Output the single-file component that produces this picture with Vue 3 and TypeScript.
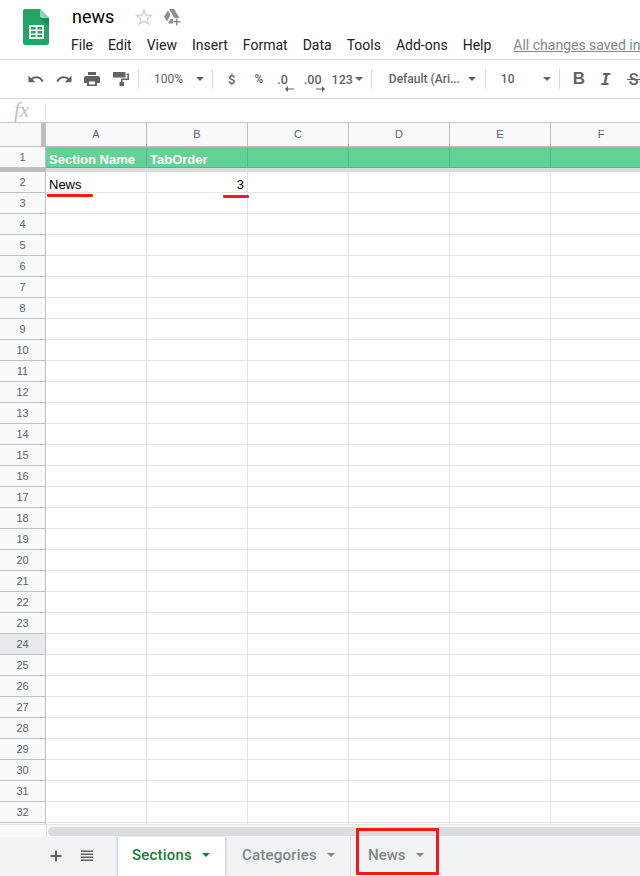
<script setup lang="ts">
const menus = ['File', 'Edit', 'View', 'Insert', 'Format', 'Data', 'Tools', 'Add-ons', 'Help']
const cols = ['A', 'B', 'C', 'D', 'E', 'F']
const rows: number[] = []
for (let i = 3; i <= 32; i++) rows.push(i)
</script>

<template>
  <div class="page">
    <header class="top">
      <svg class="logo" width="26" height="36" viewBox="0 0 26 36">
        <path d="M2 0H17L26 9V34a2 2 0 0 1-2 2H2a2 2 0 0 1-2-2V2a2 2 0 0 1 2-2z" fill="#23a566" />
        <path d="M17 9L26 18V9z" fill="#1c8a55" />
        <path d="M17 0L26 9H19a2 2 0 0 1-2-2z" fill="#8ed1b1" />
        <path d="M6 16H21V30H6zM8 18V20.500H12.500V18zM14.500 18V20.500H19V18zM8 22V24.500H12.500V22zM14.500 22V24.500H19V22zM8 26V28H12.500V26zM14.500 26V28H19V26z" fill="#f1f8f4" fill-rule="evenodd" />
      </svg>
      <div class="titles">
        <div class="title-row">
          <span class="doc">news</span>
          <svg class="star" width="18" height="18" viewBox="0 0 18 18">
            <path d="M9 2l2 5.200 5.500.3-4.300 3.500 1.500 5.300L9 13.300 4.300 16.300l1.500-5.300L1.500 7.500 7 7.200z" fill="none" stroke="#d0d0d0" stroke-width="1.200" />
          </svg>
          <svg class="drive" width="18" height="18" viewBox="0 0 18 18">
            <path d="M6 1h5l5.500 9h-5zM5 2.500l2.500 4.500-3.500 6.500-3-5zM5 15.500l2.500-4.500H10v4.500z" fill="#8f8f8f" />
            <path d="M13 10.500h1.500v2.500H17.500v1.500h-3V17.500H13v-3h-2.500V13H13z" fill="#8f8f8f" />
          </svg>
        </div>
        <nav class="menu">
          <span v-for="m in menus" :key="m">{{ m }}</span>
          <span class="saved">All changes saved in</span>
        </nav>
      </div>
    </header>

    <div class="toolbar">
      <svg class="ti" width="18" height="18" viewBox="0 0 18 18"><path d="M9.400 6.300c-2 0-3.800.7-5.200 1.900L1.500 5.500v6.800h6.800L5.600 9.600c1-.9 2.400-1.400 3.800-1.400 2.500 0 4.600 1.600 5.300 3.900l1.800-.6c-1-3-3.700-5.200-7.100-5.200z" fill="#5f6368" /></svg>
      <svg class="ti i2" width="18" height="18" viewBox="0 0 18 18"><path d="M8.600 6.300c2 0 3.800.7 5.200 1.900l2.700-2.700v6.800H9.700l2.700-2.700c-1-.9-2.400-1.400-3.800-1.400-2.500 0-4.600 1.600-5.300 3.900l-1.800-.6c1-3 3.700-5.200 7.100-5.200z" fill="#5f6368" /></svg>
      <svg class="ti i3" width="18" height="18" viewBox="0 0 18 18"><path d="M5 2h8v3H5zM3 6h12a2 2 0 0 1 2 2V13h-3v3H4V13H1V8a2 2 0 0 1 2-2zM6 11.500v3h6v-3z" fill="#5f6368" fill-rule="evenodd" /></svg>
      <svg class="ti i4" width="18" height="18" viewBox="0 0 18 18"><path d="M1 2h12.500v5.500H1zM14.500 3.500H17V10H10.500v2H12v4H7.500V12H9V8.500h6.500V5h-1z" fill="#5f6368" /></svg>
      <i class="sep s1"></i>
      <span class="tt zoom">100%</span>
      <i class="caret c1"></i>
      <i class="sep s2"></i>
      <span class="tt dollar">$</span>
      <span class="tt pct">%</span>
      <span class="tt dec1">.0<svg width="9" height="6" viewBox="0 0 9 6"><path d="M9 2.400H3V0L0 3l3 3V3.600h6z" fill="#5f6368" /></svg></span>
      <span class="tt dec2">.00<svg width="9" height="6" viewBox="0 0 9 6"><path d="M0 2.400h6V0l3 3-3 3V3.600H0z" fill="#5f6368" /></svg></span>
      <span class="tt fmt">123</span>
      <i class="caret c2"></i>
      <i class="sep s3"></i>
      <span class="tt font">Default (Ari...</span>
      <i class="caret c3"></i>
      <i class="sep s4"></i>
      <span class="tt size">10</span>
      <i class="caret c4"></i>
      <i class="sep s5"></i>
      <span class="fb bold">B</span>
      <span class="fb ital">I</span>
      <span class="fb strike">S<i></i></span>
    </div>

    <div class="formula">
      <span class="fx">fx</span>
      <i class="fx-sep"></i>
    </div>

    <div class="sheet">
      <div class="head-row">
        <div class="corner"><i class="freeze-v"></i></div>
        <div v-for="c in cols" :key="c" class="col-head">{{ c }}</div>
      </div>
      <div class="row frozen">
        <div class="num">1</div>
        <div class="cell green">Section Name</div>
        <div class="cell green">TabOrder</div>
        <div v-for="n in 4" :key="n" class="cell green"></div>
      </div>
      <div class="freeze-h"><i></i></div>
      <div class="row second">
        <div class="num">2</div>
        <div class="cell data">News<i class="ink ink-a"></i></div>
        <div class="cell data right">3<i class="ink ink-b"></i></div>
        <div v-for="n in 4" :key="n" class="cell"></div>
      </div>
      <div v-for="r in rows" :key="r" class="row">
        <div class="num" :class="{ active: r === 24 }">{{ r }}</div>
        <div v-for="n in 6" :key="n" class="cell"></div>
      </div>
      <div class="row">
        <div class="num"></div>
        <div v-for="n in 6" :key="n" class="cell"></div>
      </div>
    </div>

    <div class="scroll">
      <div class="scroll-corner"></div>
      <div class="thumb"></div>
    </div>

    <footer class="tabs">
      <svg class="add" width="12" height="12" viewBox="0 0 12 12"><path d="M5 .5h2V5h4.500v2H7v4.500H5V7H.5V5H5z" fill="#5f6368" /></svg>
      <svg class="all" width="12" height="12" viewBox="0 0 12 12"><path d="M0 .5h12V2H0zM0 3.500h12V5H0zM0 6.500h12V8H0zM0 9.500h12V11H0z" fill="#5f6368" /></svg>
      <div class="tab current">Sections<i class="tcaret"></i></div>
      <div class="tab cat">Categories<i class="tcaret"></i></div>
      <div class="tab nws">News<i class="tcaret"></i><i class="redbox"></i></div>
    </footer>
  </div>
</template>

<style scoped>
.page {
  width: 640px;
  height: 876px;
  overflow: hidden;
  display: flex;
  flex-direction: column;
  background: #fff;
  font-family: Roboto, "Liberation Sans", sans-serif;
}
.top {
  height: 59px;
  flex: none;
  display: flex;
  border-bottom: 1px solid #dadada;
  overflow: hidden;
  box-sizing: content-box;
}
.logo {
  margin: 9px 0 0 23px;
  flex: none;
}
.titles {
  margin-left: 23px;
  min-width: 0;
}
.title-row {
  display: flex;
  align-items: center;
  height: 33px;
}
.doc {
  font-size: 18px;
  color: #000;
  width: 63px;
}
.star {
  flex: none;
}
.drive {
  flex: none;
  margin-left: 10px;
}
.menu {
  display: flex;
  margin-left: -1px;
  font-size: 14px;
  color: #202124;
  white-space: nowrap;
  height: 24px;
  line-height: 24px;
}
.menu span {
  margin-right: 15px;
}
.menu .saved {
  margin: 0 0 0 7px;
  color: #80868b;
  text-decoration: underline;
}
.toolbar {
  height: 38px;
  flex: none;
  display: flex;
  align-items: center;
  border-bottom: 1px solid #dadada;
  box-sizing: content-box;
  color: #5f6368;
  overflow: hidden;
  white-space: nowrap;
}
.ti { flex: none; margin-left: 27px; }
.i2 { margin-left: 10px; }
.i3 { margin-left: 10px; }
.i4 { margin-left: 11px; }
.sep {
  flex: none;
  width: 1px;
  height: 20px;
  background: #dadada;
}
.s1 { margin-left: 8px; }
.tt { font-size: 12px; flex: none; font-weight: 500; }
.zoom { margin-left: 15px; font-weight: 400; }
.caret {
  flex: none;
  width: 0;
  height: 0;
  border: 4px solid transparent;
  border-top: 4px solid #5f6368;
  border-bottom: 0;
}
.c1 { margin-left: 13px; }
.s2 { margin-left: 8px; }
.dollar { margin-left: 15px; font-size: 13px; }
.pct { margin-left: 19px; }
.dec1, .dec2 { position: relative; font-size: 12.500px; }
.dec1 { margin-left: 14px; }
.dec2 { margin-left: 16px; }
.dec1 svg { position: absolute; left: 8px; top: 14px; }
.dec2 svg { position: absolute; left: 12px; top: 14px; }
.fmt { margin-left: 10px; font-size: 12.500px; }
.c2 { margin-left: 2px; }
.s3 { margin-left: 8px; }
.font { margin-left: 17px; width: 70px; }
.c3 { margin-left: 9px; }
.s4 { margin-left: 9px; }
.size { margin-left: 15px; width: 34px; }
.c4 { margin-left: 8px; }
.s5 { margin-left: 8px; }
.fb {
  flex: none;
  color: #5f6368;
}
.bold {
  margin-left: 13px;
  font: 700 17px "Liberation Sans", sans-serif;
  width: 12px;
}
.ital {
  margin-left: 16px;
  font: italic 700 16.500px "DejaVu Sans Mono", monospace;
  width: 10px;
}
.strike {
  margin-left: 16px;
  position: relative;
  font: 500 16px Roboto, sans-serif;
  padding-left: 2px;
}
.strike i {
  position: absolute;
  left: 0;
  top: 9px;
  width: 14px;
  height: 1.500px;
  background: #5f6368;
}
.formula {
  height: 23px;
  flex: none;
  display: flex;
  align-items: center;
  border-bottom: 1px solid #c6c6c6;
  box-sizing: content-box;
}
.fx {
  width: 45px;
  box-sizing: border-box;
  padding-left: 14px;
  font-family: "Liberation Serif", serif;
  font-style: italic;
  font-size: 21px;
  color: #c0c0c0;
  line-height: 23px;
}
.fx-sep {
  width: 1px;
  height: 16px;
  background: #dadada;
}
.sheet {
  flex: none;
  height: 701px;
  overflow: hidden;
}
.head-row, .row {
  display: grid;
  grid-template-columns: 46px repeat(6, 101px);
}
.head-row {
  height: 24px;
  background: #f8f9fa;
}
.corner {
  position: relative;
  border-right: 1px solid #c0c0c0;
  border-bottom: 1px solid #c0c0c0;
}
.freeze-v {
  position: absolute;
  right: 0;
  top: 0;
  width: 4px;
  height: 23px;
  background: #bdbdbd;
}
.col-head {
  border-right: 1px solid #c0c0c0;
  border-bottom: 1px solid #c0c0c0;
  font: 11px/23px "Liberation Sans", sans-serif;
  color: #5f6368;
  text-align: center;
}
.row {
  height: 21px;
  grid-template-rows: 21px;
}
.num {
  background: #f8f9fa;
  border-right: 1px solid #c0c0c0;
  border-bottom: 1px solid #c0c0c0;
  font: 11px/20px "Liberation Sans", sans-serif;
  color: #5f6368;
  text-align: center;
}
.num.active {
  background: #e8eaed;
}
.cell {
  position: relative;
  box-sizing: border-box;
  border-right: 1px solid #e2e3e3;
  border-bottom: 1px solid #e2e3e3;
  font: 13px/20px "Liberation Sans", sans-serif;
  color: #000;
  padding: 0 3px;
  white-space: nowrap;
}
.green {
  background: #63d297;
  color: #fff;
  font-weight: 700;
  line-height: 25px;
  border-right-color: #52b983;
  border-bottom-color: #52b983;
}
.data {
  line-height: 25px;
}
.freeze-h {
  height: 4px;
  background: #d9dbdf;
  display: grid;
  grid-template-columns: 46px 1fr;
}
.freeze-h i {
  background: #bdbdbd;
}
.right {
  text-align: right;
}
.ink {
  position: absolute;
  z-index: 2;
  height: 3px;
  background: #f31a1a;
  border-radius: 1px;
}
.ink-a {
  left: 1px;
  top: 22px;
  width: 46px;
}
.ink-b {
  right: -2px;
  top: 23px;
  width: 26px;
}
.scroll {
  height: 13px;
  flex: none;
  display: flex;
  background: #f8f9fa;
  border-top: 1px solid #e2e3e3;
  box-sizing: border-box;
}
.scroll-corner {
  width: 46px;
  flex: none;
  border-right: 1px solid #e2e3e3;
}
.thumb {
  flex: 1;
  height: 9px;
  margin: 2px 0 0 1px;
  background: #dadce0;
  border-radius: 5px 0 0 5px;
}
.tabs {
  flex: 1;
  display: flex;
  align-items: stretch;
  background: #f1f3f4;
  font-size: 15px;
  letter-spacing: 0.2px;
  font-weight: 500;
}
.add {
  flex: none;
  margin: 13px 0 0 50px;
}
.all {
  flex: none;
  margin: 13px 0 0 19px;
}
.tab {
  position: relative;
  display: flex;
  align-items: center;
  color: #80868b;
  white-space: nowrap;
  box-sizing: border-box;
  border-right: 1px solid #dadce0;
  padding-bottom: 3px;
}
.current {
  margin-left: 24px;
  width: 109px;
  padding-left: 14px;
  background: #fff;
  color: #188038;
  border-left: 1px solid #dadce0;
  box-shadow: 0 0 2px rgba(60, 64, 67, 0.3);
}
.cat {
  width: 125px;
  padding-left: 16px;
}
.nws {
  width: 90px;
  padding-left: 17px;
  border-right: 0;
  letter-spacing: 0;
}
.tcaret {
  width: 0;
  height: 0;
  margin-left: 10px;
  border: 4px solid transparent;
  border-top: 4px solid currentColor;
  border-bottom: 0;
}
.redbox {
  position: absolute;
  left: 5px;
  top: -9px;
  width: 83px;
  height: 47px;
  box-sizing: border-box;
  border: 3px solid #f31a1a;
  border-radius: 1px;
}
</style>
